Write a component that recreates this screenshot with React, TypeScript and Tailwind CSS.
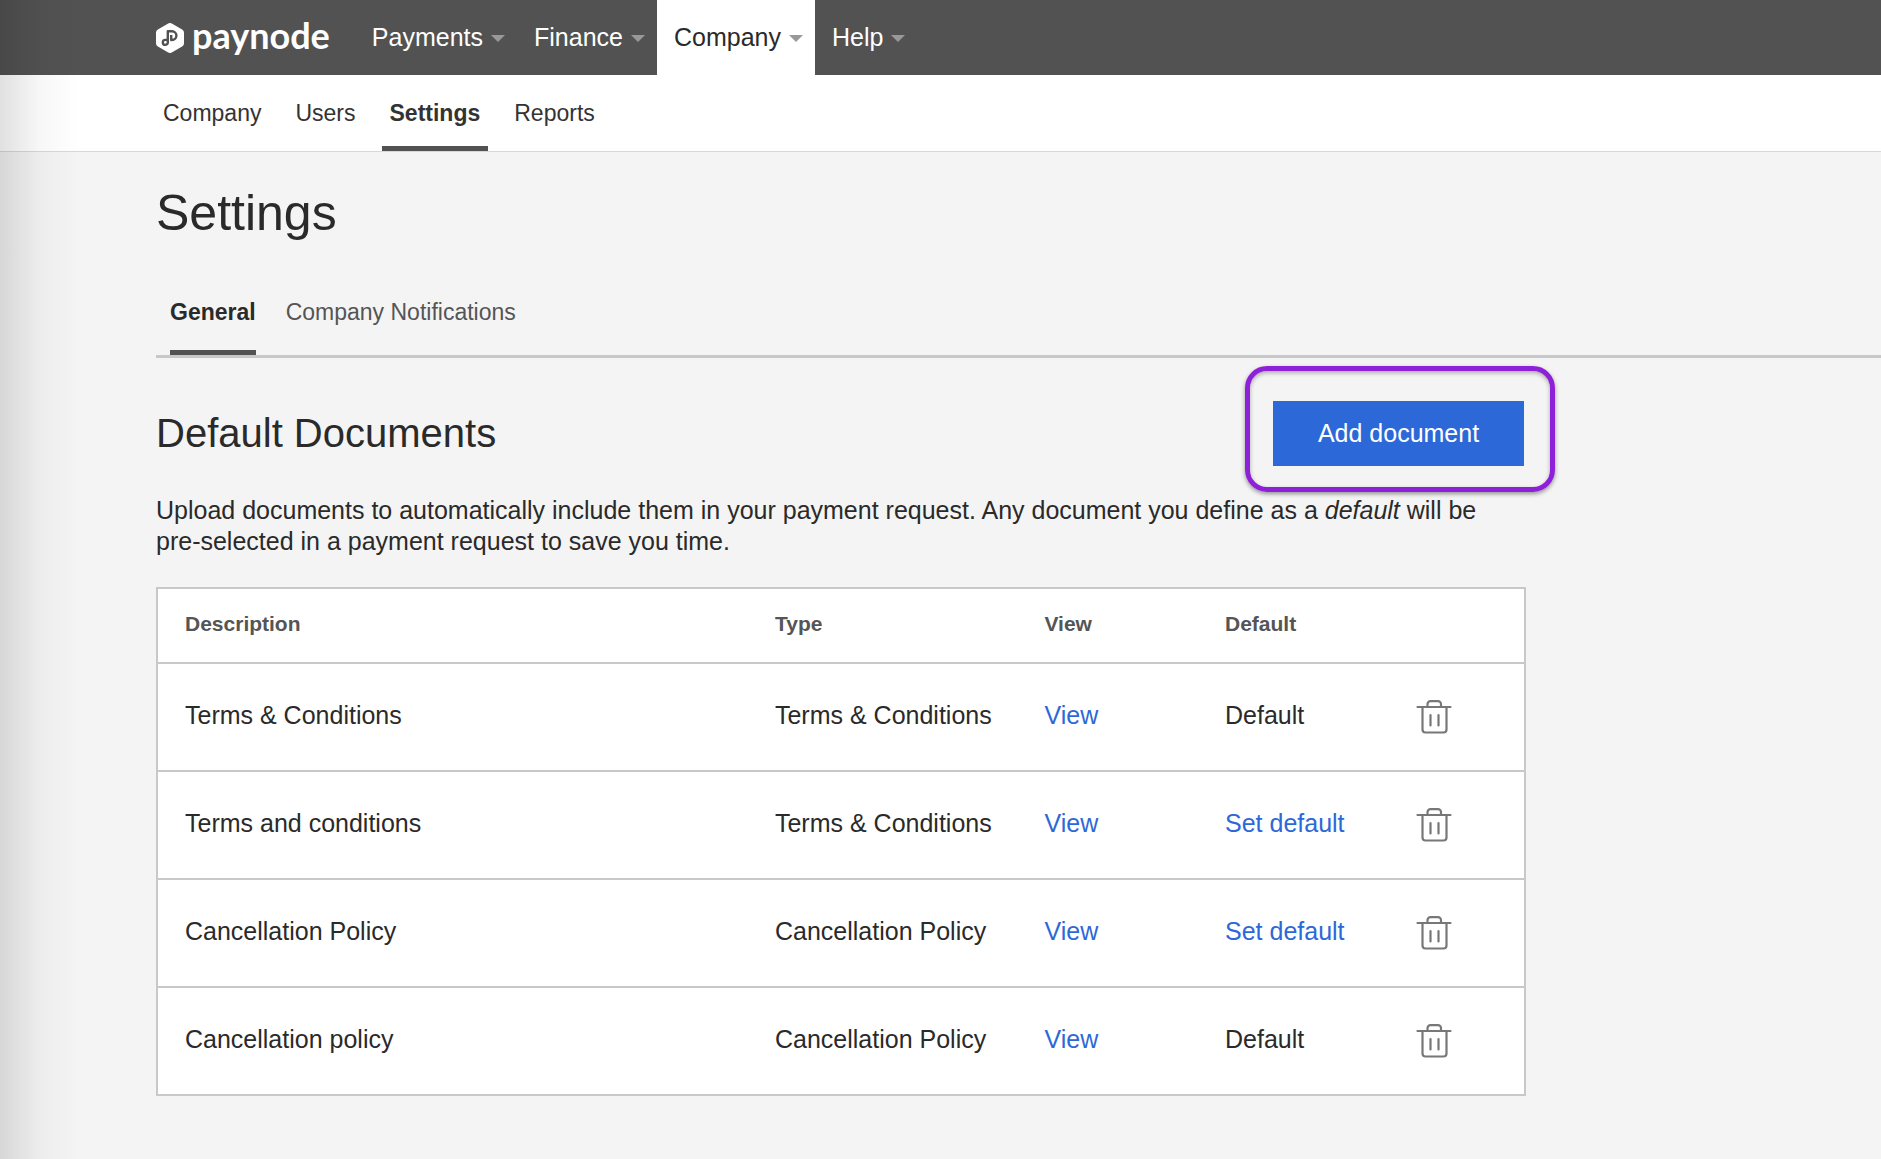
import React from 'react';

interface NavItem {
  label: string;
  active?: boolean;
}

interface DocumentRow {
  id: number;
  description: string;
  type: string;
  isDefault: boolean;
}

const MAIN_NAV: NavItem[] = [
  { label: 'Payments' },
  { label: 'Finance' },
  { label: 'Company', active: true },
  { label: 'Help' },
];

const SUB_NAV: NavItem[] = [
  { label: 'Company' },
  { label: 'Users' },
  { label: 'Settings', active: true },
  { label: 'Reports' },
];

const DOCUMENTS: DocumentRow[] = [
  { id: 1, description: 'Terms & Conditions', type: 'Terms & Conditions', isDefault: true },
  { id: 2, description: 'Terms and conditions', type: 'Terms & Conditions', isDefault: false },
  { id: 3, description: 'Cancellation Policy', type: 'Cancellation Policy', isDefault: false },
  { id: 4, description: 'Cancellation policy', type: 'Cancellation Policy', isDefault: true },
];

const Logo: React.FC = () => (
  <a href="#" className="flex items-center gap-2 text-white">
    <svg viewBox="0 0 28 30" className="h-[30px] w-7" aria-hidden="true">
      <path
        fill="currentColor"
        d="M12.2.5a3.6 3.6 0 0 1 3.6 0l10.3 5.9A3.6 3.6 0 0 1 28 9.5v11a3.6 3.6 0 0 1-1.9 3.1l-10.3 5.9a3.6 3.6 0 0 1-3.6 0L1.9 23.6A3.6 3.6 0 0 1 0 20.5v-11a3.6 3.6 0 0 1 1.9-3.1z"
      />
      <path
        fill="none"
        stroke="#525252"
        strokeWidth="2.4"
        strokeLinejoin="round"
        d="M11.8 19.4V8.2h4.2a4.4 4.4 0 0 1 0 8.8h-.8V12M11.8 19.4a2.5 2.5 0 1 1-2.5-2.5h2.5"
      />
    </svg>
    <span className="pb-1.5 font-['Lato',sans-serif] text-[36px] leading-[36px] font-bold">paynode</span>
  </a>
);

const TopNav: React.FC = () => (
  <header className="flex h-[75px] bg-[#525252] pl-[156px]">
    <Logo />
    <nav className="ml-[25px] flex">
      {MAIN_NAV.map((item) => (
        <a
          key={item.label}
          href="#"
          className={`flex items-center gap-2 pr-3 pl-[17px] text-[25px] ${
            item.active ? 'bg-white text-[#2a2a2a]' : 'text-white'
          }`}
        >
          {item.label}
          <span className="mt-0.5 border-x-[7px] border-t-[7px] border-x-transparent border-t-[#999]" />
        </a>
      ))}
    </nav>
  </header>
);

const SubNav: React.FC = () => (
  <nav className="flex h-[77px] gap-[18px] border-b border-[#d8d8d8] bg-white pl-[155px] text-[#333]">
    {SUB_NAV.map((item) => (
      <a
        key={item.label}
        href="#"
        className={`flex items-center border-y-[5px] border-t-transparent px-2 text-[23px] ${
          item.active ? 'border-b-[#525252] font-bold' : 'border-b-transparent'
        }`}
      >
        {item.label}
      </a>
    ))}
  </nav>
);

const TrashIcon: React.FC = () => (
  <svg viewBox="0 0 36 34" className="h-[34px] w-9" fill="none" stroke="#777" strokeWidth="2.2" strokeLinecap="round" aria-hidden="true">
    <path d="M1.5 7h33M6.5 7v22.5a3 3 0 0 0 3 3h18a3 3 0 0 0 3-3V7M11.5 6.5V4.2a3 3 0 0 1 3-3H22a3 3 0 0 1 3 3v2.3M14.5 15v10.500M22.500 15v10.500" />
  </svg>
);

const DocumentsTable: React.FC = () => (
  <table className="mt-[30px] w-full table-fixed border-collapse border-2 border-[#c8c8c8] bg-white text-left text-[25px] leading-[31px]">
    <thead>
      <tr className="h-[75px] text-[21px] text-[#555]">
        <th className="w-[43.2%] pb-1 pl-[27px]">Description</th>
        <th className="w-[19.7%] pb-1 pl-[27px]">Type</th>
        <th className="w-[13.2%] pb-1 pl-[27px]">View</th>
        <th className="w-[14%] pb-1 pl-[27px]">Default</th>
        <th aria-label="Actions" />
      </tr>
    </thead>
    <tbody>
      {DOCUMENTS.map((doc) => (
        <tr key={doc.id} className="h-[108px] border-t-2 border-[#c8c8c8]">
          <td className="pb-[3px] pl-[27px]">{doc.description}</td>
          <td className="pb-[3px] pl-[27px]">{doc.type}</td>
          <td className="pb-[3px] pl-[27px]">
            <a href="#" className="text-[#2d68d8]">View</a>
          </td>
          <td className="pb-[3px] pl-[27px]">
            {doc.isDefault ? 'Default' : <button type="button" className="text-[#2d68d8]">Set default</button>}
          </td>
          <td className="pl-[26px]">
            <button type="button" aria-label={`Delete ${doc.description}`} className="block">
              <TrashIcon />
            </button>
          </td>
        </tr>
      ))}
    </tbody>
  </table>
);

const App: React.FC = () => {
  return (
    <div className="relative min-h-screen overflow-hidden bg-[#f4f4f4] font-['Liberation_Sans',Arial,sans-serif] text-[#2a2a2a]">
      <TopNav />
      <SubNav />

      <main className="pt-[31px] pl-[156px]">
        <h1 className="text-[50px] leading-[60px]">Settings</h1>

        <div className="mt-[43px] flex gap-[30px] border-b-[3px] border-[#c8c8c8] pl-3.5 text-[23px]">
          <button type="button" className="h-[69px] border-b-[5px] border-[#525252] pb-3 font-bold">General</button>
          <button type="button" className="h-[69px] border-b-[5px] border-transparent pb-3 text-[#555]">Company Notifications</button>
        </div>

        <section className="max-w-[1370px]">
          <div className="mt-2 flex items-center justify-between">
            <h2 className="pt-2 text-[40px] leading-[48px]">Default Documents</h2>
            <div className="-mr-[29px] rounded-[22px] border-[5px] border-[#8e20d8] pt-[30px] pr-[26px] pb-[21px] pl-[23px] shadow-[0_2px_4px_rgba(0,0,0,0.4),inset_0_2px_4px_rgba(0,0,0,0.3)]">
              <button type="button" className="h-[65px] w-[251px] bg-[#2d68d8] text-[25px] text-white">
                Add document
              </button>
            </div>
          </div>
          <p className="mt-[3px] text-[25px] leading-[31px]">
            Upload documents to automatically include them in your payment request. Any document you define as a{' '}
            <em>default</em> will be pre-selected in a payment request to save you time.
          </p>
          <DocumentsTable />
        </section>
      </main>

      {/* Soft shade along the left edge */}
      <div className="pointer-events-none absolute inset-y-0 left-0 w-20 bg-linear-to-r from-black/12 via-black/3 to-transparent" />
    </div>
  );
};

export default App;
